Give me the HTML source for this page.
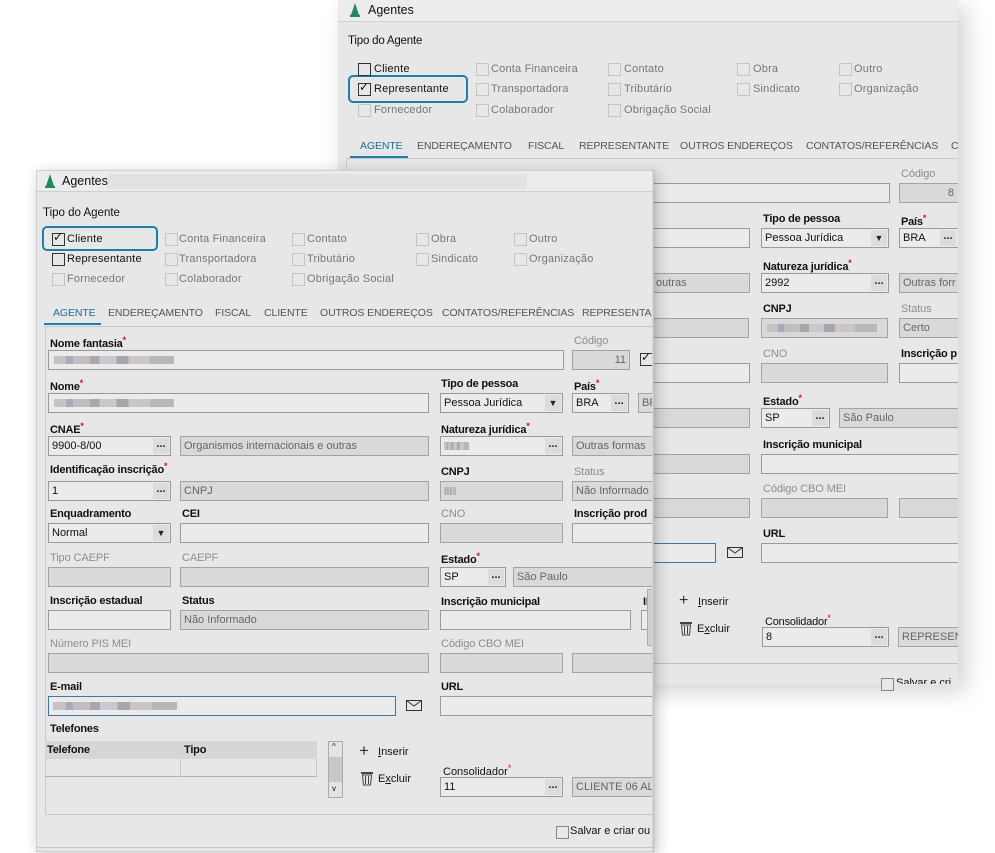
<!DOCTYPE html>
<html><head><meta charset="utf-8"><style>
body{margin:0;width:995px;height:853px;background:#fff;position:relative;overflow:hidden;font-family:"Liberation Sans",sans-serif;font-size:11px;color:#111}
.clip{position:absolute;left:0;top:0;overflow:hidden}
.w{position:absolute;background:#e7e7e7;overflow:hidden}
.a{position:absolute;white-space:nowrap}
.l{position:absolute;white-space:nowrap;font-size:11px;color:#111;font-weight:bold;letter-spacing:-0.2px}
.g{position:absolute;white-space:nowrap;font-size:11px;color:#8d8d8d;letter-spacing:-0.1px}
.b{position:absolute;box-sizing:border-box;border:1px solid #a3a3a3;background:#d9d9d9;height:20px;line-height:18px;padding-left:3px;white-space:nowrap;overflow:hidden;color:#666;font-size:11px}
.e{background:#ebebeb;color:#111;border-color:#9a9a9a}
.d{position:absolute;right:1px;top:1px;width:16px;height:16px;background:#dcdcdc;text-align:center;line-height:12px;font-weight:bold;color:#222}
.cb{position:absolute;width:11px;height:11px;border:1px solid #c4c4c4;background:#e7e7e7}
.cbk{border-color:#333}
.ct{position:absolute;white-space:nowrap;color:#777;font-size:11px;letter-spacing:.2px}
.ck{color:#111}
.tab{position:absolute;white-space:nowrap;color:#555;font-size:10.5px;letter-spacing:-.1px}
.bl{position:absolute;height:8px;background:linear-gradient(90deg,#c8c2c5 0 10%,#aab 10% 16%,#c4bdc0 16% 30%,#a9a7ad 30% 38%,#c7c9cc 38% 52%,#aba4aa 52% 62%,#cac6c8 62% 80%,#b8b8b8 80% 100%)}
.hl{position:absolute;box-sizing:border-box;border:2px solid #1d7fae;border-radius:5px}
.rs{color:#e01010;font-size:9px;vertical-align:4px}
</style></head><body>

<!-- BACK WINDOW -->
<div class="w" style="left:338px;top:0;width:620px;height:685px;box-shadow:8px 6px 22px rgba(0,0,0,.18)">
 <div style="position:absolute;left:0;top:0;width:620px;height:21px;background:#ececec;border-bottom:1px solid #d0d0d0"></div>
 <svg style="position:absolute;left:11px;top:3px" width="12" height="15"><polygon points="6,0 10,12 2,12" fill="#1f8a5a"/><rect x="1" y="12" width="10" height="2" fill="#1f8a5a"/></svg>
 <div class="a" style="left:30px;top:3px;font-size:12.5px">Agentes</div>
 <div class="l" style="left:10px;top:35px;font-weight:normal;font-size:11.5px">Tipo do Agente</div>
</div>
<div class="clip" style="width:958px;height:853px">
<div class="hl" style="left:348px;top:75px;width:120px;height:28px"></div>
<div class="cb cbk" style="left:358px;top:63px"></div><div class="ct ck" style="left:374px;top:63px">Cliente</div>
<div class="cb cbk" style="left:358px;top:83px"></div><div class="a" style="left:359px;top:80px;font-size:12px">✓</div><div class="ct ck" style="left:374px;top:83px">Representante</div>
<div class="cb" style="left:358px;top:104px"></div><div class="ct" style="left:374px;top:104px">Fornecedor</div>
<div class="cb" style="left:476px;top:63px"></div><div class="ct" style="left:491px;top:63px">Conta Financeira</div>
<div class="cb" style="left:476px;top:83px"></div><div class="ct" style="left:491px;top:83px">Transportadora</div>
<div class="cb" style="left:476px;top:104px"></div><div class="ct" style="left:491px;top:104px">Colaborador</div>
<div class="cb" style="left:608px;top:63px"></div><div class="ct" style="left:624px;top:63px">Contato</div>
<div class="cb" style="left:608px;top:83px"></div><div class="ct" style="left:624px;top:83px">Tributário</div>
<div class="cb" style="left:608px;top:104px"></div><div class="ct" style="left:624px;top:104px">Obrigação Social</div>
<div class="cb" style="left:737px;top:63px"></div><div class="ct" style="left:753px;top:63px">Obra</div>
<div class="cb" style="left:737px;top:83px"></div><div class="ct" style="left:753px;top:83px">Sindicato</div>
<div class="cb" style="left:839px;top:63px"></div><div class="ct" style="left:854px;top:63px">Outro</div>
<div class="cb" style="left:839px;top:83px"></div><div class="ct" style="left:854px;top:83px">Organização</div>
<div class="tab" style="left:360px;top:140px;color:#1a6fa3">AGENTE</div>
<div style="position:absolute;left:350px;top:156px;width:58px;height:2px;background:#1a7fb5"></div>
<div class="tab" style="left:417px;top:140px">ENDEREÇAMENTO</div>
<div class="tab" style="left:528px;top:140px">FISCAL</div>
<div class="tab" style="left:579px;top:140px">REPRESENTANTE</div>
<div class="tab" style="left:680px;top:140px">OUTROS ENDEREÇOS</div>
<div class="tab" style="left:806px;top:140px">CONTATOS/REFERÊNCIAS</div>
<div class="tab" style="left:951px;top:140px">C</div>
<div style="position:absolute;left:346px;top:158px;width:612px;height:1px;background:#c8c8c8"></div>
<div style="position:absolute;left:346px;top:158px;width:1px;height:505px;background:#c8c8c8"></div>
<div class="g" style="left:901px;top:168px">Código</div>
<div class="b" style="left:899px;top:183px;width:70px;text-align:right;padding-right:14px">8</div>
<div class="b e" style="left:600px;top:183px;width:290px"></div>
<div class="l" style="left:763px;top:213px">Tipo de pessoa</div>
<div class="b e" style="left:761px;top:228px;width:128px">Pessoa Jurídica<span class="d" style="line-height:17px;font-size:9px">▼</span></div>
<div class="l" style="left:901px;top:213px">País<span class="rs">*</span></div>
<div class="b e" style="left:899px;top:228px;width:62px">BRA<span class="d" style="right:4px">...</span></div>
<div class="b e" style="left:600px;top:228px;width:150px"></div>
<div class="l" style="left:763px;top:258px">Natureza jurídica<span class="rs">*</span></div>
<div class="b e" style="left:761px;top:273px;width:128px">2992<span class="d">...</span></div>
<div class="b" style="left:899px;top:273px;width:70px">Outras forr</div>
<div class="b" style="left:600px;top:273px;width:150px;padding-left:55px">outras</div>
<div class="l" style="left:763px;top:303px">CNPJ</div>
<div class="b" style="left:761px;top:318px;width:127px"><div class="bl" style="left:5px;top:5px;width:110px"></div></div>
<div class="g" style="left:901px;top:303px">Status</div>
<div class="b" style="left:899px;top:318px;width:70px">Certo</div>
<div class="b" style="left:600px;top:318px;width:149px"></div>
<div class="g" style="left:763px;top:348px">CNO</div>
<div class="b" style="left:761px;top:363px;width:127px"></div>
<div class="l" style="left:901px;top:348px">Inscrição p</div>
<div class="b e" style="left:899px;top:363px;width:70px"></div>
<div class="b e" style="left:600px;top:363px;width:150px"></div>
<div class="l" style="left:763px;top:393px">Estado<span class="rs">*</span></div>
<div class="b e" style="left:761px;top:408px;width:69px">SP<span class="d">...</span></div>
<div class="b" style="left:839px;top:408px;width:130px">São Paulo</div>
<div class="b" style="left:600px;top:408px;width:150px"></div>
<div class="l" style="left:763px;top:439px">Inscrição municipal</div>
<div class="b e" style="left:761px;top:454px;width:210px"></div>
<div class="b" style="left:600px;top:454px;width:150px"></div>
<div class="g" style="left:763px;top:483px">Código CBO MEI</div>
<div class="b" style="left:761px;top:498px;width:127px"></div>
<div class="b" style="left:899px;top:498px;width:70px"></div>
<div class="b" style="left:600px;top:498px;width:150px"></div>
<div class="l" style="left:763px;top:528px">URL</div>
<div class="b e" style="left:761px;top:543px;width:210px"></div>
<div class="b e" style="left:600px;top:543px;width:116px;border-color:#3a78a8"></div>
<svg style="position:absolute;left:727px;top:547px" width="16" height="11"><rect x=".5" y=".5" width="15" height="10" fill="none" stroke="#333"/><path d="M.5 .5 8 6 15.5 .5" fill="none" stroke="#333"/></svg>
<div class="a" style="left:679px;top:592px;font-size:16px;color:#333">+</div><div class="a" style="left:698px;top:596px"><u>I</u>nserir</div>
<svg style="position:absolute;left:680px;top:621px" width="12" height="15"><rect x="0" y="1" width="12" height="2" fill="#444"/><path d="M1.5 4h9l-1 10h-7z" fill="none" stroke="#444"/><path d="M4.5 5v8M7.5 5v8" stroke="#444"/></svg>
<div class="a" style="left:697px;top:623px">E<u>x</u>cluir</div>
<div class="l" style="left:765px;top:613px;font-weight:normal">Consolidador<span class="rs">*</span></div>
<div class="b e" style="left:762px;top:627px;width:127px">8<span class="d">...</span></div>
<div class="b" style="left:898px;top:627px;width:70px">REPRESENTA</div>
<div style="position:absolute;left:652px;top:663px;width:306px;height:1px;background:#c0c0c0"></div>
<div class="cb" style="left:881px;top:678px;border-color:#888"></div>
<div class="a" style="left:896px;top:677px;height:7px;overflow:hidden">Salvar e cri</div>
</div>

<!-- FRONT WINDOW -->
<div class="w" style="left:36px;top:170px;width:616px;height:680px;box-shadow:3px 3px 14px rgba(0,0,0,.22);border:1px solid #d0d0d0">
 <div style="position:absolute;left:0;top:0;width:616px;height:20px;background:#ececec;border-bottom:1px solid #d0d0d0"></div>
 <div style="position:absolute;left:70px;top:3px;width:420px;height:15px;background:#e2e2e2"></div>
 <svg style="position:absolute;left:7px;top:3px" width="12" height="15"><polygon points="6,0 10,12 2,12" fill="#1f8a5a"/><rect x="1" y="12" width="10" height="2" fill="#1f8a5a"/></svg>
 <div class="a" style="left:25px;top:3px;font-size:12.5px">Agentes</div>
 <div class="a" style="left:6px;top:36px;font-size:11.5px">Tipo do Agente</div>
 <div style="position:absolute;left:8px;top:155px;width:608px;height:1px;background:#c8c8c8"></div>
 <div style="position:absolute;left:8px;top:155px;width:1px;height:488px;background:#c8c8c8"></div>
 <div style="position:absolute;left:8px;top:643px;width:608px;height:1px;background:#c8c8c8"></div>
 <div style="position:absolute;left:0;top:676px;width:616px;height:1px;background:#c8c8c8"></div>
</div>
<div class="clip" style="width:652px;height:853px">
<div class="hl" style="left:42px;top:226px;width:116px;height:25px"></div>
<div class="cb cbk" style="left:52px;top:233px"></div><div class="a" style="left:53px;top:230px;font-size:12px">✓</div><div class="ct ck" style="left:67px;top:233px">Cliente</div>
<div class="cb cbk" style="left:52px;top:253px"></div><div class="ct ck" style="left:67px;top:253px">Representante</div>
<div class="cb" style="left:52px;top:273px"></div><div class="ct" style="left:67px;top:273px">Fornecedor</div>
<div class="cb" style="left:165px;top:233px"></div><div class="ct" style="left:179px;top:233px">Conta Financeira</div>
<div class="cb" style="left:165px;top:253px"></div><div class="ct" style="left:179px;top:253px">Transportadora</div>
<div class="cb" style="left:165px;top:273px"></div><div class="ct" style="left:179px;top:273px">Colaborador</div>
<div class="cb" style="left:292px;top:233px"></div><div class="ct" style="left:307px;top:233px">Contato</div>
<div class="cb" style="left:292px;top:253px"></div><div class="ct" style="left:307px;top:253px">Tributário</div>
<div class="cb" style="left:292px;top:273px"></div><div class="ct" style="left:307px;top:273px">Obrigação Social</div>
<div class="cb" style="left:416px;top:233px"></div><div class="ct" style="left:431px;top:233px">Obra</div>
<div class="cb" style="left:416px;top:253px"></div><div class="ct" style="left:431px;top:253px">Sindicato</div>
<div class="cb" style="left:514px;top:233px"></div><div class="ct" style="left:529px;top:233px">Outro</div>
<div class="cb" style="left:514px;top:253px"></div><div class="ct" style="left:529px;top:253px">Organização</div>
<div class="tab" style="left:53px;top:307px;color:#1a6fa3">AGENTE</div>
<div style="position:absolute;left:44px;top:323px;width:57px;height:2px;background:#1a7fb5"></div>
<div class="tab" style="left:108px;top:307px">ENDEREÇAMENTO</div>
<div class="tab" style="left:215px;top:307px">FISCAL</div>
<div class="tab" style="left:264px;top:307px">CLIENTE</div>
<div class="tab" style="left:320px;top:307px">OUTROS ENDEREÇOS</div>
<div class="tab" style="left:442px;top:307px">CONTATOS/REFERÊNCIAS</div>
<div class="tab" style="left:582px;top:307px">REPRESENTANTE</div>

<div class="l" style="left:50px;top:335px">Nome fantasia<span class="rs">*</span></div>
<div class="b e" style="left:48px;top:350px;width:516px"><div class="bl" style="left:5px;top:5px;width:120px"></div></div>
<div class="g" style="left:574px;top:335px">Código</div>
<div class="b" style="left:572px;top:350px;width:58px;text-align:right;padding-right:3px">11</div>
<div class="cb cbk" style="left:640px;top:353px"></div><div class="a" style="left:641px;top:350px;font-size:12px">✓</div>

<div class="l" style="left:50px;top:378px">Nome<span class="rs">*</span></div>
<div class="b e" style="left:48px;top:393px;width:381px"><div class="bl" style="left:5px;top:5px;width:120px"></div></div>
<div class="l" style="left:441px;top:378px">Tipo de pessoa</div>
<div class="b e" style="left:440px;top:393px;width:123px">Pessoa Jurídica<span class="d" style="line-height:17px;font-size:9px">▼</span></div>
<div class="l" style="left:574px;top:378px">País<span class="rs">*</span></div>
<div class="b e" style="left:572px;top:393px;width:57px">BRA<span class="d">...</span></div>
<div class="b" style="left:638px;top:393px;width:20px">BR</div>

<div class="l" style="left:50px;top:421px">CNAE<span class="rs">*</span></div>
<div class="b e" style="left:48px;top:436px;width:123px">9900-8/00<span class="d">...</span></div>
<div class="b" style="left:180px;top:436px;width:249px">Organismos internacionais e outras</div>
<div class="l" style="left:441px;top:421px">Natureza jurídica<span class="rs">*</span></div>
<div class="b e" style="left:440px;top:436px;width:123px"><div class="bl" style="left:3px;top:5px;width:25px"></div><span class="d">...</span></div>
<div class="b" style="left:572px;top:436px;width:90px">Outras formas</div>

<div class="l" style="left:50px;top:461px">Identificação inscrição<span class="rs">*</span></div>
<div class="b e" style="left:48px;top:481px;width:123px">1<span class="d">...</span></div>
<div class="b" style="left:180px;top:481px;width:249px">CNPJ</div>
<div class="l" style="left:441px;top:466px">CNPJ</div>
<div class="b" style="left:440px;top:481px;width:123px"><div class="bl" style="left:3px;top:5px;width:12px"></div></div>
<div class="g" style="left:574px;top:466px">Status</div>
<div class="b" style="left:572px;top:481px;width:90px">Não Informado</div>

<div class="l" style="left:50px;top:508px">Enquadramento</div>
<div class="b e" style="left:48px;top:523px;width:123px">Normal<span class="d" style="line-height:17px;font-size:9px">▼</span></div>
<div class="l" style="left:182px;top:508px">CEI</div>
<div class="b e" style="left:180px;top:523px;width:249px"></div>
<div class="g" style="left:441px;top:508px">CNO</div>
<div class="b" style="left:440px;top:523px;width:123px"></div>
<div class="l" style="left:574px;top:508px">Inscrição prod</div>
<div class="b e" style="left:572px;top:523px;width:90px"></div>

<div class="g" style="left:50px;top:552px">Tipo CAEPF</div>
<div class="b" style="left:48px;top:567px;width:123px"></div>
<div class="g" style="left:182px;top:552px">CAEPF</div>
<div class="b" style="left:180px;top:567px;width:249px"></div>
<div class="l" style="left:441px;top:551px">Estado<span class="rs">*</span></div>
<div class="b e" style="left:440px;top:567px;width:66px">SP<span class="d">...</span></div>
<div class="b" style="left:513px;top:567px;width:150px">São Paulo</div>

<div class="l" style="left:50px;top:595px">Inscrição estadual</div>
<div class="b e" style="left:48px;top:610px;width:123px"></div>
<div class="l" style="left:182px;top:595px">Status</div>
<div class="b" style="left:180px;top:610px;width:249px">Não Informado</div>
<div class="l" style="left:441px;top:596px">Inscrição municipal</div>
<div class="b e" style="left:440px;top:610px;width:191px"></div>
<div class="l" style="left:643px;top:596px">ID</div>
<div class="b e" style="left:641px;top:610px;width:20px"></div>
<div style="position:absolute;left:647px;top:589px;width:14px;height:57px;border:1px solid #aaa;background:#d0d0d0;box-sizing:border-box"></div>

<div class="g" style="left:50px;top:638px">Número PIS MEI</div>
<div class="b" style="left:48px;top:653px;width:381px"></div>
<div class="g" style="left:441px;top:638px">Código CBO MEI</div>
<div class="b" style="left:440px;top:653px;width:123px"></div>
<div class="b" style="left:572px;top:653px;width:90px"></div>

<div class="l" style="left:50px;top:681px">E-mail</div>
<div class="b e" style="left:48px;top:696px;width:348px;border-color:#3a78a8"><div class="bl" style="left:4px;top:5px;width:124px"></div></div>
<svg style="position:absolute;left:406px;top:700px" width="16" height="11"><rect x=".5" y=".5" width="15" height="10" fill="none" stroke="#333"/><path d="M.5 .5 8 6 15.5 .5" fill="none" stroke="#333"/></svg>
<div class="l" style="left:441px;top:681px">URL</div>
<div class="b e" style="left:440px;top:696px;width:220px"></div>

<div class="l" style="left:50px;top:723px">Telefones</div>
<div style="position:absolute;left:45px;top:741px;width:272px;height:18px;background:#d6d6d6"></div>
<div class="l" style="left:47px;top:744px">Telefone</div>
<div class="l" style="left:184px;top:744px">Tipo</div>
<div style="position:absolute;left:45px;top:759px;width:272px;height:18px;border-bottom:1px solid #b0b0b0;border-right:1px solid #c8c8c8;box-sizing:border-box"></div>
<div style="position:absolute;left:180px;top:759px;width:1px;height:18px;background:#c8c8c8"></div>
<div style="position:absolute;left:328px;top:741px;width:15px;height:57px;border:1px solid #aaa;background:#e4e4e4;box-sizing:border-box"><div style="position:absolute;left:0;top:15px;width:13px;height:25px;background:#c8c8c8"></div><div class="a" style="left:3px;top:0;font-size:8px">^</div><div class="a" style="left:3px;top:42px;font-size:8px">v</div></div>
<div class="a" style="left:359px;top:741px;font-size:17px;color:#333">+</div><div class="a" style="left:378px;top:746px"><u>I</u>nserir</div>
<svg style="position:absolute;left:361px;top:771px" width="12" height="15"><rect x="0" y="1" width="12" height="2" fill="#444"/><path d="M1.5 4h9l-1 10h-7z" fill="none" stroke="#444"/><path d="M4.5 5v8M7.5 5v8" stroke="#444"/></svg>
<div class="a" style="left:378px;top:773px">E<u>x</u>cluir</div>
<div class="a" style="left:443px;top:763px">Consolidador<span class="rs">*</span></div>
<div class="b e" style="left:440px;top:777px;width:123px">11<span class="d">...</span></div>
<div class="b" style="left:572px;top:777px;width:90px">CLIENTE 06 ALEX</div>
<div class="cb" style="left:556px;top:826px;border-color:#888"></div>
<div class="a" style="left:570px;top:825px">Salvar e criar ou</div>
</div>
<div style="position:absolute;left:652px;top:170px;width:6px;height:683px;background:linear-gradient(90deg,rgba(0,0,0,.08),rgba(0,0,0,0))"></div>
</body></html>
